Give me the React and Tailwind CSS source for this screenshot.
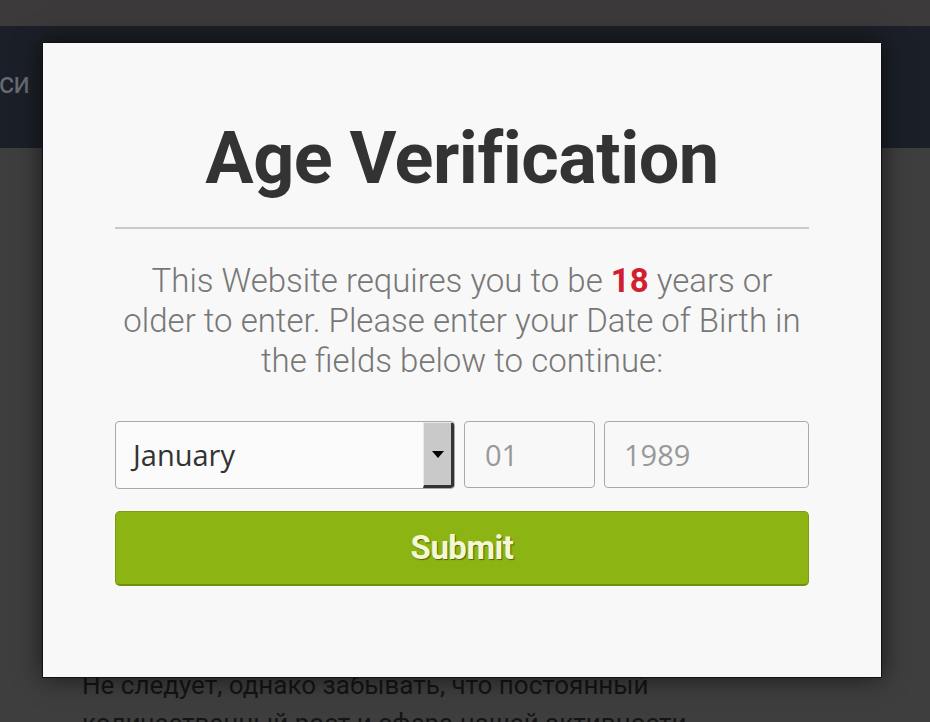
export default function App() {
  return (
    <div className="relative w-[930px] h-[722px] overflow-hidden bg-[#3e3e3e]" style={{ fontFamily: "Roboto, sans-serif" }}>
      {/* top band */}
      <div className="h-[26px] bg-[#3c3a3a]" />
      {/* navbar */}
      <div className="h-[122px] bg-[#1b1f27] flex items-center">
        <span className="text-[29px] text-[#676b72] ml-[-1px] mt-[-6px] tracking-[-1px]">си</span>
      </div>
      {/* page text */}
      <div className="pl-[82px] pt-[518px] text-[26px] leading-[38px] text-[#141414]" style={{ fontFamily: "'Liberation Sans Narrow', 'Roboto', sans-serif" }}>
        <p>Не следует, однако забывать, что постоянный</p>
        <p>количественный рост и сфера нашей активности</p>
      </div>

      {/* modal */}
      <div className="absolute left-[42px] top-[42px] w-[840px] h-[636px] bg-[#f8f8f8] border border-[#111] shadow-[0_0_24px_rgba(0,0,0,0.6)] px-[72px]">
        <h1 className="text-center font-bold text-[#333] text-[72px] leading-none pt-[80px] tracking-[-0.5px]">Age Verification</h1>
        <div className="mt-[32px] h-[2px] bg-[#c9c9c9]" />
        <p className="mt-[32px] text-center font-light text-[#777] text-[33px] leading-[40px]">
          This Website requires you to be <span className="font-bold text-[#d0202e]">18</span> years or older to enter. Please enter your Date of Birth in the fields below to continue:
        </p>
        <div className="mt-[40px] flex gap-[9px]" style={{ fontFamily: "'Open Sans', sans-serif" }}>
          <div className="w-[340px] h-[68px] flex items-center border border-[#a9a9a9] rounded-[4px] bg-[#fbfbfb] overflow-hidden">
            <span className="flex-1 pl-[17px] text-[29px] text-[#333]">January</span>
            <div className="w-[31px] h-full bg-[#c9c9c9] border-l border-t border-[#e8e8e8] border-r-[3px] border-b-[3px] border-r-[#333] border-b-[#333] rounded-r-[3px] flex items-center justify-center">
              <div className="w-0 h-0 border-l-[6px] border-r-[6px] border-t-[7px] border-l-transparent border-r-transparent border-t-black" />
            </div>
          </div>
          <div className="w-[131px] h-[67px] flex items-center border border-[#a9a9a9] rounded-[4px] bg-[#f8f8f8] pl-[20px] text-[29px] text-[#999]">01</div>
          <div className="flex-1 h-[67px] flex items-center border border-[#a9a9a9] rounded-[4px] bg-[#f8f8f8] pl-[19px] text-[29px] text-[#999]">1989</div>
        </div>
        <div className="mt-[22px] h-[75px] rounded-[5px] bg-[#8cb412] border border-[#7a9c10] border-b-[2px] border-b-[#6f8f0d] flex items-center justify-center">
          <span className="font-bold text-[33px] text-[#f4f7d2] tracking-[-0.5px]" style={{ textShadow: "1px 1px 1px rgba(0,0,0,0.45)" }}>Submit</span>
        </div>
      </div>
    </div>
  );
}
